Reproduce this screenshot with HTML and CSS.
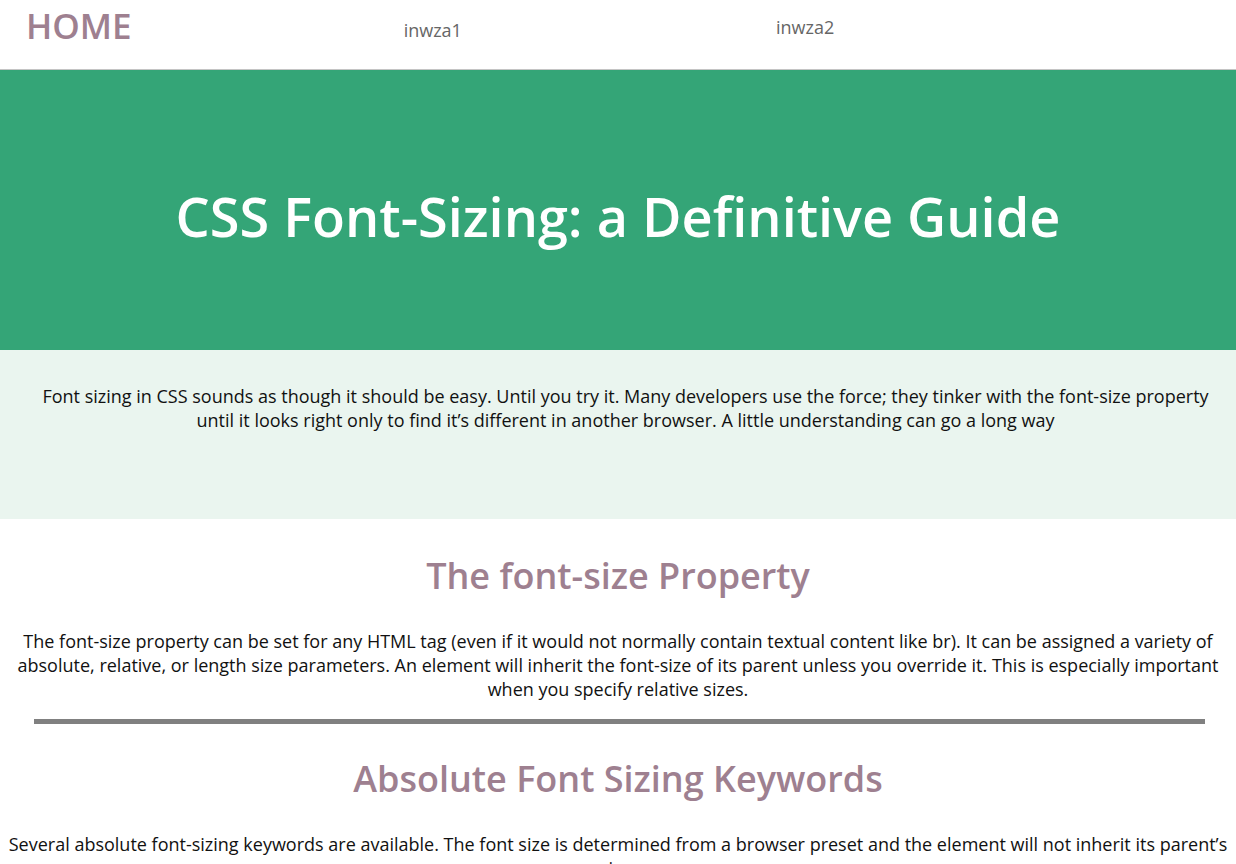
FILE: index.html
```html
<!DOCTYPE html>
<html lang="en">
<head>
<meta charset="utf-8">
<title>CSS Font-Sizing</title>
<link rel="stylesheet" href="styles.css">
</head>
<body>
<header class="topbar">
  <a class="brand" href="#">HOME</a>
  <nav class="nav">
    <a class="nav-link nav-link-1" href="#">inwza1</a>
    <a class="nav-link nav-link-2" href="#">inwza2</a>
  </nav>
</header>
<section class="hero">
  <h1 class="hero-title">CSS Font-Sizing: a Definitive Guide</h1>
</section>
<section class="intro">
  <p class="intro-text">Font sizing in CSS sounds as though it should be easy. Until you try it. Many developers use the force; they tinker with the font-size property until it looks right only to find it’s different in another browser. A little understanding can go a long way</p>
</section>
<main class="content">
  <h2 class="section-title">The font-size Property</h2>
  <p class="section-text">The font-size property can be set for any HTML tag (even if it would not normally contain textual content like br). It can be assigned a variety of absolute, relative, or length size parameters. An element will inherit the font-size of its parent unless you override it. This is especially important when you specify relative sizes.</p>
  <hr class="divider">
  <h2 class="section-title">Absolute Font Sizing Keywords</h2>
  <p class="section-text section-text-wide">Several absolute font-sizing keywords are available. The font size is determined from a browser preset and the element will not inherit its parent’s size.</p>
</main>
</body>
</html>
```

FILE: styles.css
```css
html, body {
  margin: 0;
  padding: 0;
}
body {
  font-family: "Open Sans", "Noto Sans", sans-serif;
  color: #111;
  background: #fff;
}
.topbar {
  height: 69px;
  border-bottom: 1px solid #c4c4c4;
  display: flex;
  align-items: flex-start;
}
.brand {
  font-size: 35px;
  font-weight: 600;
  color: #9e8090;
  text-decoration: none;
  line-height: 50px;
  margin-left: 26px;
  margin-top: 1px;
}
.nav {
  display: flex;
  align-items: flex-start;
}
.nav-link {
  font-size: 18px;
  color: #666;
  text-decoration: none;
  line-height: 24px;
}
.nav-link-1 {
  margin-left: 272px;
  margin-top: 18px;
}
.nav-link-2 {
  margin-left: 314px;
  margin-top: 15px;
}
.hero {
  background: #34a577;
  height: 280px;
  display: flex;
  align-items: center;
  justify-content: center;
}
.hero-title {
  margin: 0;
  color: #fff;
  font-size: 54px;
  font-weight: 600;
  line-height: 70px;
  padding-top: 12px;
}
.intro {
  background: #eaf5ef;
  height: 169px;
  box-sizing: border-box;
  padding: 34px 20px 0 35px;
}
.intro-text {
  margin: 0;
  text-align: center;
  font-size: 18px;
  line-height: 24px;
}
.content {
  text-align: center;
  padding-top: 32px;
}
.section-title {
  margin: 0;
  font-size: 36px;
  font-weight: 600;
  color: #9e8090;
  line-height: 50px;
}
.section-text {
  margin: 28px 12px 0;
  font-size: 18px;
  line-height: 24px;
}
.section-text-wide {
  margin-left: 6px;
  margin-right: 6px;
}
.divider {
  margin: 18px 31px 30px 34px;
  height: 5px;
  border: 0;
  background: #808080;
}
```
